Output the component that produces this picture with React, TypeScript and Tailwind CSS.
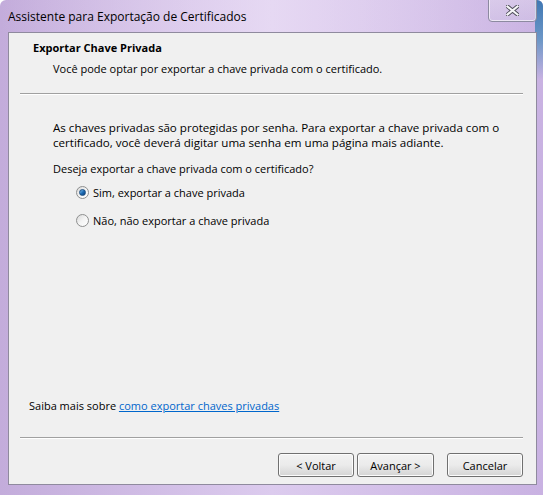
import React, { useState } from 'react';

const font = { fontFamily: '"Open Sans", "Noto Sans", "Liberation Sans", sans-serif' };

const Radio: React.FC<{ checked: boolean; label: string; onClick: () => void }> = ({ checked, label, onClick }) => (
    <div onClick={onClick} className="flex items-center h-[15px] cursor-default">
        <div className="w-[13px] h-[13px] rounded-full border border-[#8e8f8f] bg-gradient-to-br from-[#d9d9d9] via-[#f4f4f4] to-[#ffffff] flex items-center justify-center">
            {checked && (
                <div className="w-[7px] h-[7px] rounded-full bg-gradient-to-br from-[#7ec0ee] via-[#1d6db6] to-[#0b3d7a] border border-[#1a4d80]"></div>
            )}
        </div>
        <span className="ml-[4px]">{label}</span>
    </div>
);

const WinButton: React.FC<{ label: string; width: string }> = ({ label, width }) => (
    <button
        className={`${width} h-[24px] rounded-[3px] border border-[#707070] bg-gradient-to-b from-[#f2f2f2] via-[#ebebeb] to-[#d4d4d4] text-black leading-none shadow-[inset_0_0_0_1px_#fcfcfc]`}
    >
        {label}
    </button>
);

export default function App() {
    const [exportKey, setExportKey] = useState(true);

    return (
        <div
            style={font}
            className="relative w-[543px] h-[495px] overflow-hidden rounded-t-[6px] bg-gradient-to-r from-[#c3acdb] via-[#dccbee] to-[#c9b2e2] text-[11px] text-black"
        >
            {/* glass highlight */}
            <div className="absolute inset-x-0 top-0 h-[32px] bg-gradient-to-r from-transparent via-[#f0e6f8]/50 to-transparent"></div>
            <div className="absolute right-0 top-0 w-[8px] h-[80px] bg-gradient-to-b from-[#3f78b3] via-[#6d97c7] to-transparent"></div>

            {/* title bar */}
            <div className="relative h-[32px] flex items-center pl-[8px] pt-[2px]">
                <span className="text-[12px] text-black">Assistente para Exportação de Certificados</span>
            </div>

            {/* close button */}
            <div className="absolute top-[-2px] left-[488px] w-[49px] h-[24px] rounded-b-[4px] border border-[#8c8aa0] bg-gradient-to-b from-[#e8e2f0]/40 to-[#d4cae6]/40 shadow-[inset_0_0_0_1px_rgba(255,255,255,0.6)] flex items-center justify-center">
                <svg width="13" height="11" viewBox="0 0 13 11">
                    <path d="M1.5 1.5 L11.5 9.5 M11.5 1.5 L1.5 9.5" stroke="#4a4a55" strokeWidth="4" strokeLinecap="square" />
                    <path d="M1.5 1.5 L11.5 9.5 M11.5 1.5 L1.5 9.5" stroke="#f4f4f6" strokeWidth="2.2" strokeLinecap="square" />
                </svg>
            </div>

            {/* client area */}
            <div className="relative ml-[8px] w-[529px] h-[453px] border border-[#8f8a9e] bg-[#f0f0f0] flex flex-col">
                <div className="pt-[7px] pl-[24px] leading-[15px]">
                    <div className="font-bold">Exportar Chave Privada</div>
                    <div className="mt-[6px] pl-[20px]">Você pode optar por exportar a chave privada com o certificado.</div>
                </div>
                <div className="mt-[17px] ml-[11px] mr-[13px] h-[2px] border-t border-[#a0a0a0] border-b border-b-white"></div>

                <div className="pl-[44px] pr-[14px] leading-[15px]">
                    <p className="mt-[25px] text-[11.6px]">
                        As chaves privadas são protegidas por senha. Para exportar a chave privada com o certificado, você deverá digitar uma senha em uma página mais adiante.
                    </p>
                    <p className="mt-[11px]">Deseja exportar a chave privada com o certificado?</p>
                    <div className="pl-[23px] mt-[9px] flex flex-col gap-[13px]">
                        <Radio checked={exportKey} label="Sim, exportar a chave privada" onClick={() => setExportKey(true)} />
                        <Radio checked={!exportKey} label="Não, não exportar a chave privada" onClick={() => setExportKey(false)} />
                    </div>
                </div>

                <div className="flex-1"></div>

                <div className="pl-[20px] leading-[15px]">
                    Saiba mais sobre{' '}
                    <a href="#" className="text-[#0066cc] underline">como exportar chaves privadas</a>
                </div>
                <div className="mt-[24px] ml-[11px] mr-[13px] h-[2px] border-t border-[#a0a0a0] border-b border-b-white"></div>

                <div className="mt-[14px] mb-[7px] mr-[13px] flex justify-end">
                    <WinButton label="< Voltar" width="w-[76px]" />
                    <div className="ml-[3px]"><WinButton label="Avançar >" width="w-[77px]" /></div>
                    <div className="ml-[13px]"><WinButton label="Cancelar" width="w-[76px]" /></div>
                </div>
            </div>
        </div>
    );
}
